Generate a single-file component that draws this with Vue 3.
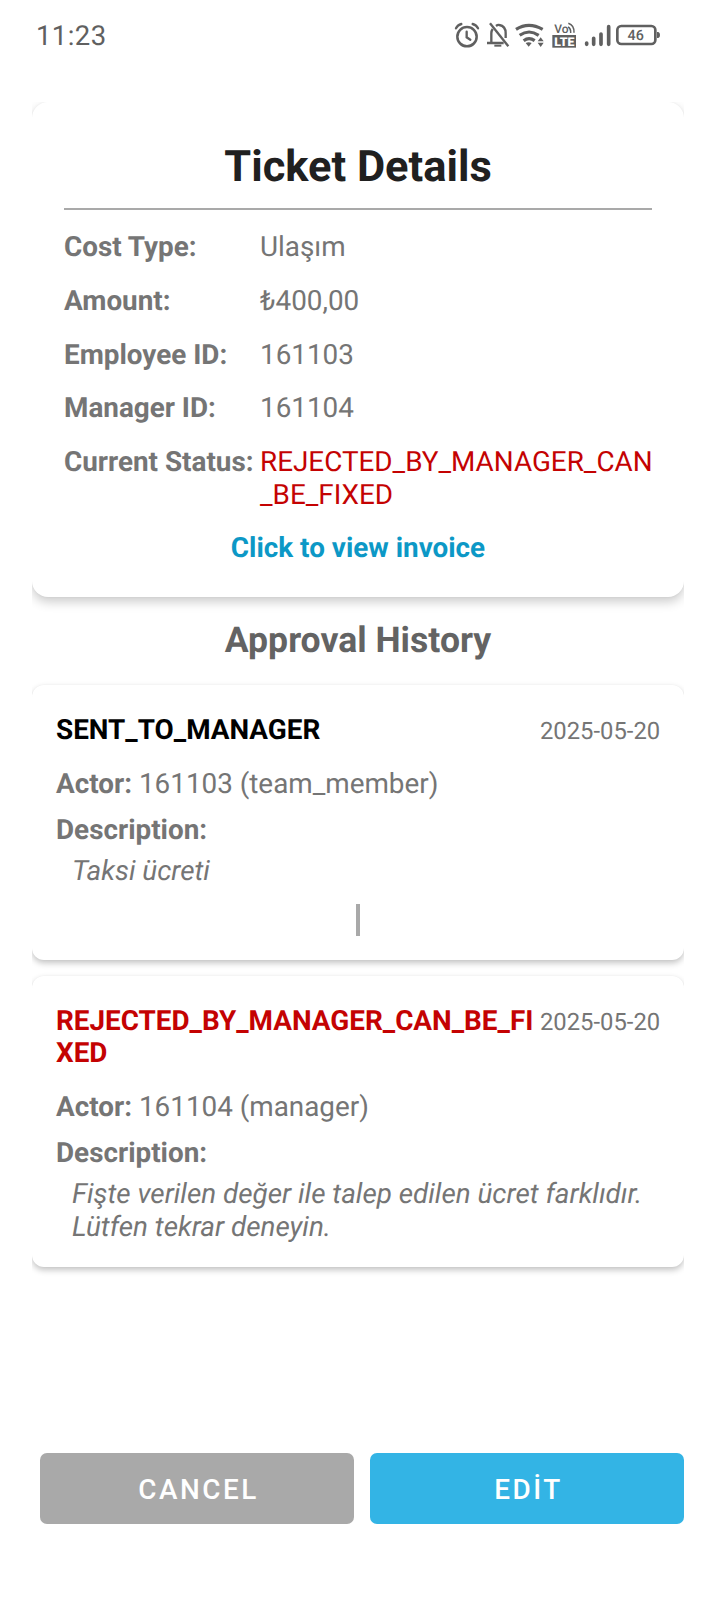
<script setup>
const fields = [
  { label: 'Cost Type:', value: 'Ulaşım' },
  { label: 'Amount:', value: '₺400,00' },
  { label: 'Employee ID:', value: '161103' },
  { label: 'Manager ID:', value: '161104' },
  { label: 'Current Status:', value: 'REJECTED_BY_MANAGER_CAN_BE_FIXED', rejected: true },
]

const history = [
  {
    status: 'SENT_TO_MANAGER',
    date: '2025-05-20',
    actor: '161103 (team_member)',
    description: 'Taksi ücreti',
    connector: true,
  },
  {
    status: 'REJECTED_BY_MANAGER_CAN_BE_FIXED',
    date: '2025-05-20',
    actor: '161104 (manager)',
    description: 'Fişte verilen değer ile talep edilen ücret farklıdır. Lütfen tekrar deneyin.',
    rejected: true,
  },
]
</script>

<template>
  <div class="screen">
    <header class="status-bar">
      <span class="clock">11:23</span>
      <svg class="status-icons" viewBox="0 0 720 150" fill="none" stroke="#606060">
        <g stroke-width="7.5" stroke-linecap="round">
          <circle cx="81" cy="80" r="29" />
          <path d="M80 65v17l11 7" stroke-width="7" />
          <path d="M48 55q5-10 16-13M98 42q11 3 16 13" stroke-width="7" />
        </g>
        <g stroke-width="7">
          <path d="M154 100V70q0-7 4-13M141 99h50M168 48q5-4 10-3q19 3 19 25v14" />
          <path d="M150 40l55 69" />
          <path d="M163 107h21" stroke-width="6" />
        </g>
        <g stroke-width="9.5">
          <path d="M228 58q38-24 80 0" />
          <path d="M239 76q28-20 57 0" />
          <path d="M251 92q16-12 33 0" />
        </g>
        <path d="M257 99q9-5 18 0l-9 11zM293 94l9-12 9 12zM293 98h18l-9 13z" fill="#606060" stroke="none" />
        <text class="vo" x="343" y="70">Vo</text>
        <path d="M384 51q9 4 8 18M385 40q18 6 17 28" stroke-width="4.5" />
        <rect x="337" y="75" width="71" height="38" fill="#606060" stroke="none" />
        <text class="lte" x="343" y="107" textLength="60" lengthAdjust="spacingAndGlyphs">LTE</text>
        <g stroke-width="11" stroke-linecap="round">
          <path d="M440 99v4M461 85v18M483 72v31M506 50v53" />
        </g>
        <rect x="532" y="48" width="114" height="54" rx="12" stroke-width="8" />
        <path d="M651 66h4q5 1 5 9t-5 9h-4z" fill="#606060" stroke="none" />
        <text class="level" x="587" y="90" text-anchor="middle">46</text>
      </svg>
    </header>

    <main class="content">
      <section class="card details">
        <h1>Ticket Details</h1>
        <dl>
          <div v-for="field in fields" :key="field.label" class="field">
            <dt>{{ field.label }}</dt>
            <dd :class="{ rejected: field.rejected }">{{ field.value }}</dd>
          </div>
        </dl>
        <a class="invoice">Click to view invoice</a>
      </section>

      <h2>Approval History</h2>

      <section v-for="entry in history" :key="entry.status" class="card entry">
        <div class="entry-head">
          <strong :class="{ rejected: entry.rejected }">{{ entry.status }}</strong>
          <time>{{ entry.date }}</time>
        </div>
        <p class="actor"><b>Actor:</b> {{ entry.actor }}</p>
        <p class="caption"><b>Description:</b></p>
        <p class="description">{{ entry.description }}</p>
        <div v-if="entry.connector" class="connector"></div>
      </section>
    </main>

    <footer class="actions">
      <button class="cancel">CANCEL</button>
      <button class="edit">EDİT</button>
    </footer>
  </div>
</template>

<style>
body {
  margin: 0;
  background: #fff;
}
</style>

<style scoped>
.screen {
  width: 716px;
  height: 1600px;
  overflow: hidden;
  display: flex;
  flex-direction: column;
  background: #fff;
  color: #757575;
  font-family: Roboto, "Noto Sans", sans-serif;
  font-size: 27.85px;
  line-height: 32.5px;
  text-rendering: geometricPrecision;
}

h1, h2, dl, dd, p {
  margin: 0;
}

.status-bar {
  height: 102px;
  flex: none;
  display: flex;
  justify-content: space-between;
  align-items: flex-start;
  box-sizing: border-box;
  padding: 10px 36px 0 36px;
}

.clock {
  margin-top: 10px;
  color: #606060;
  font-size: 27.5px;
  letter-spacing: 0.4px;
}

.status-icons {
  width: 240px;
  height: 50px;
}

.status-icons text {
  fill: #606060;
  stroke: none;
  font-family: Roboto, sans-serif;
}

.status-icons .vo {
  font-size: 36px;
  font-weight: 500;
}

.status-icons .lte {
  fill: #fff;
  font-size: 36px;
  font-weight: 900;
}

.status-icons .level {
  font-size: 43px;
  font-weight: 500;
}

.content {
  height: 1351px;
  flex: none;
  margin: 0 32px;
  overflow: hidden;
}

.card {
  box-sizing: border-box;
  background: #fff;
}

.details {
  height: 495px;
  padding: 39px 32px 0;
  border-radius: 16px;
  box-shadow: 0 5px 11px rgba(0, 0, 0, 0.2), 0 0 3px rgba(0, 0, 0, 0.05);
}

h1 {
  height: 69px;
  line-height: 51px;
  box-sizing: border-box;
  border-bottom: 2px solid #a9a9a9;
  color: #202020;
  font-size: 43.4px;
  font-weight: 700;
  text-align: center;
}

dl {
  padding-top: 21px;
}

.field {
  display: flex;
  margin-bottom: 21.3px;
}

dt {
  width: 196px;
  flex: none;
  font-weight: 700;
  white-space: nowrap;
}

dd {
  width: 393px;
  flex: none;
  word-break: break-all;
}

.rejected {
  color: #c40202;
}

.invoice {
  display: block;
  color: #0c98c6;
  font-weight: 700;
  text-align: center;
}

h2 {
  height: 88px;
  box-sizing: border-box;
  padding-top: 22px;
  color: #636363;
  font-size: 35.6px;
  font-weight: 700;
  line-height: 42px;
  text-align: center;
}

.entry {
  padding: 29px 24px 24px;
  margin-bottom: 16px;
  border-radius: 12px;
  box-shadow: 0 3px 6px rgba(0, 0, 0, 0.24), 0 0 2px rgba(0, 0, 0, 0.03);
}

.entry-head {
  display: flex;
  justify-content: space-between;
  align-items: baseline;
}

.entry-head strong {
  width: 484px;
  flex: none;
  color: #000;
  font-weight: 700;
  word-break: break-all;
}

.entry-head strong.rejected {
  color: #c40202;
}

time {
  font-size: 23.8px;
  line-height: 28px;
  white-space: nowrap;
}

.actor {
  margin-top: 21.5px;
}

.caption {
  margin-top: 13px;
}

.description {
  padding: 0 16px;
  margin-top: 9px;
  font-style: italic;
}

.connector {
  width: 4px;
  height: 32px;
  margin: 16px auto 0;
  background: #a9a9a9;
}

.actions {
  display: flex;
  gap: 16px;
  padding: 0 32px 0 40px;
}

button {
  height: 71px;
  flex: 1;
  padding: 2px 0 0 3px;
  border: 0;
  border-radius: 7px;
  color: #fff;
  font: 500 27.85px Roboto, sans-serif;
  letter-spacing: 2.5px;
}

.cancel {
  background: #a9a9a9;
}

.edit {
  background: #33b4e5;
}
</style>
